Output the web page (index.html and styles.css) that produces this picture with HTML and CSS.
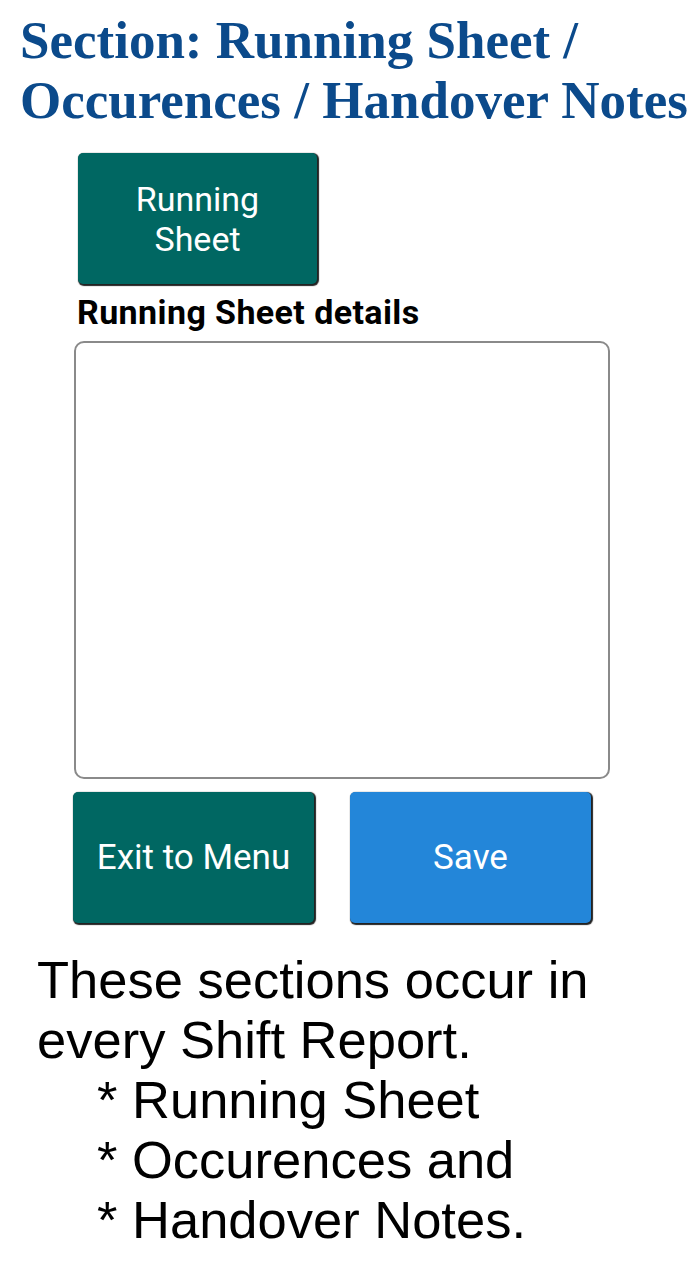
FILE: index.html
```html
<!DOCTYPE html>
<html lang="en">
<head>
    <meta charset="UTF-8">
    <meta name="viewport" content="width=device-width, initial-scale=1.0">
    <title>Running Sheet</title>
    <link rel="stylesheet" href="styles.css">
</head>
<body>
    <h1 class="title">Section: Running Sheet /<br>Occurences / Handover Notes</h1>

    <div class="screen">
        <button class="btn btn-teal btn-tab">Running<br>Sheet</button>

        <label class="field-label" for="details">Running Sheet details</label>
        <textarea id="details" class="details"></textarea>

        <div class="actions">
            <button class="btn btn-teal">Exit to Menu</button>
            <button class="btn btn-blue">Save</button>
        </div>
    </div>

    <div class="notes">
        <p>These sections occur in<br>every Shift Report.</p>
        <p class="item">* Running Sheet</p>
        <p class="item">* Occurences and</p>
        <p class="item">* Handover Notes.</p>
    </div>
</body>
</html>
```

FILE: styles.css
```css
/* page */
body {
    margin: 0;
    background: #fff;
    font-family: Roboto, Arial, sans-serif;
}

/* heading */
.title {
    margin: 0;
    padding: 10px 0 0 20px;
    font-family: "Liberation Serif", "Times New Roman", serif;
    font-size: 53px;
    line-height: 60px;
    font-weight: bold;
    color: #0b4a8b;
    white-space: nowrap;
}

/* app screen */
.screen {
    padding: 23px 0 0 74px;
    width: 536px;
}

.btn {
    border: none;
    border-radius: 5px;
    color: #fff;
    font-family: Roboto, Arial, sans-serif;
    font-size: 35px;
    box-shadow: 1px 1px 1px 1px #222;
    cursor: pointer;
}

.btn-teal {
    background-color: #006762;
}

.btn-blue {
    background-color: #2386d9;
}

.btn-tab {
    display: block;
    margin-left: 4px;
    width: 239px;
    height: 131px;
    font-size: 34px;
    line-height: 40px;
}

.field-label {
    display: block;
    margin: 8px 0 0 3px;
    font-size: 34px;
    letter-spacing: 0.4px;
    font-weight: bold;
    color: #000;
}

.details {
    display: block;
    box-sizing: border-box;
    margin-top: 9px;
    width: 536px;
    height: 438px;
    border: 2px solid #8a8a8a;
    border-radius: 10px;
    resize: none;
}

.actions {
    display: flex;
    gap: 36px;
    margin-top: 13px;
    margin-left: -1px;
}

.actions .btn {
    width: 241px;
    height: 131px;
}

/* notes */
.notes {
    padding: 27px 0 0 37px;
    font-family: "Liberation Sans", Arial, sans-serif;
    font-size: 52.5px;
    line-height: 60px;
    color: #000;
}

.notes p {
    margin: 0;
}

.notes .item {
    padding-left: 60px;
}
```
